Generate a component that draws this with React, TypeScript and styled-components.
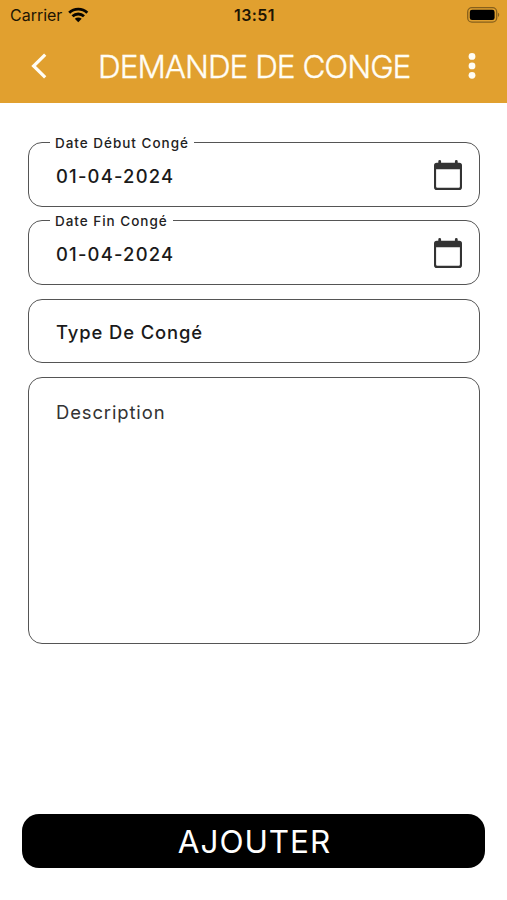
import React from "react";
import styled, { createGlobalStyle } from "styled-components";

const GlobalStyle = createGlobalStyle`
  * { box-sizing: border-box; }
  body { margin: 0; background: #fff; font-family: Inter, "Liberation Sans", sans-serif; }
`;

const Screen = styled.div`
  display: flex;
  flex-direction: column;
  height: 900px;
  width: 100%;
  background: #fff;
  overflow: hidden;
`;

const Header = styled.header`
  height: 103px;
  flex: none;
  background: #e1a02f;
`;

const StatusBar = styled.div`
  display: grid;
  grid-template-columns: 1fr auto 1fr;
  align-items: center;
  height: 30px;
  padding: 0 8px 0 10px;
  color: #1d1503;
`;

const Carrier = styled.div`
  display: flex;
  align-items: center;
  gap: 6px;
  font-size: 16px;
  letter-spacing: -0.02px;
  line-height: 30px;
  svg { display: block; margin-top: -1px; }
`;

const Clock = styled.div`
  font-size: 16px;
  font-weight: 600;
  letter-spacing: 0.4px;
`;

const Battery = styled.div`
  display: flex;
  justify-content: flex-end;
  margin: -1px -1px 0 0;
`;

const NavBar = styled.div`
  display: flex;
  align-items: center;
  height: 73px;
  padding: 0 28px 0 30px;
`;

const IconButton = styled.button`
  display: flex;
  margin-top: -1px;
  padding: 0;
  border: 0;
  background: none;
  color: #fffdf5;
`;

const Title = styled.h1`
  flex: 1;
  margin: 0;
  padding-left: 50px;
  color: #fffdf5;
  font-size: 31.5px;
  font-weight: 300;
  line-height: 73px;
  letter-spacing: -1px;
  white-space: nowrap;
  -webkit-text-stroke: 0.35px #fffdf5;
`;

const Form = styled.main`
  display: flex;
  flex-direction: column;
  flex: 1;
  gap: 14px;
  padding: 39px 27px 0 28px;
`;

const DateGroup = styled.div`
  display: flex;
  flex-direction: column;
  gap: 13px;
`;

const Field = styled.div<{ $height: number; $top?: boolean }>`
  position: relative;
  display: flex;
  flex: none;
  align-items: ${(p) => (p.$top ? "flex-start" : "center")};
  justify-content: space-between;
  height: ${(p) => p.$height}px;
  padding: ${(p) => (p.$top ? "22px 16px 0 27px" : "2px 17px 0 27px")};
  border: 1.4px solid #555;
  border-radius: 14px;
`;

const FloatingLabel = styled.label`
  position: absolute;
  top: -9px;
  left: 21px;
  padding: 0 5px 0 5px;
  background: #fff;
  color: #222;
  font-size: 13.5px;
  font-weight: 500;
  line-height: 18px;
  letter-spacing: 0.98px;
  white-space: nowrap;
`;

const Value = styled.span<{ $spacing: number; $weight?: number }>`
  color: ${(p) => (p.$weight === 400 ? "#333" : "#1a1a1a")};
  font-size: 18.4px;
  font-weight: ${(p) => p.$weight ?? 500};
  line-height: 24px;
  letter-spacing: ${(p) => p.$spacing}px;
`;

const DateValue = styled(Value)`
  padding-top: 1px;
`;

const Footer = styled.footer`
  padding: 0 22px 32px 22px;
`;

const SubmitButton = styled.button`
  display: block;
  width: 100%;
  height: 54px;
  padding: 2px 0 0 2px;
  border: 0;
  border-radius: 17px;
  background: #000;
  color: #fff;
  font-family: inherit;
  font-size: 31.5px;
  font-weight: 400;
  line-height: 52px;
  letter-spacing: 0.95px;
`;

const WifiIcon = () => (
  <svg width="21" height="16" viewBox="0 0 21 16" fill="none" stroke="#080500" strokeWidth="2.9">
    <path d="M1.2 5.7C6.3 .9 14.2 .9 19.3 5.7" />
    <path d="M4.5 9.2c3.3-3 8.2-3 11.5 0" />
    <path d="M10.25 15.3 6.8 11.8c2-1.7 4.9-1.7 6.9 0Z" fill="#080500" stroke="none" />
  </svg>
);

const BatteryIcon = () => (
  <svg width="33" height="16" viewBox="0 0 33 16">
    <rect x=".7" y=".7" width="29" height="14.4" rx="4.2" fill="none" stroke="#87601c" strokeWidth="1.3" />
    <rect x="2.8" y="2.8" width="24.8" height="10.2" rx="2.3" fill="#000" />
    <path d="M31 5.8c1.7.7 1.7 3.5 0 4.2Z" fill="#87601c" />
  </svg>
);

const BackIcon = () => (
  <svg width="18" height="28" viewBox="0 0 18 28" fill="none" stroke="currentColor" strokeWidth="3.2">
    <path d="M15.2 2.6 3.6 14l11.6 11.4" />
  </svg>
);

const MoreIcon = () => (
  <svg width="14" height="28" viewBox="0 0 14 28" fill="currentColor">
    <circle cx="7" cy="4.4" r="3.4" />
    <circle cx="7" cy="13.9" r="3.4" />
    <circle cx="7" cy="23.3" r="3.4" />
  </svg>
);

const CalendarIcon = () => (
  <svg width="28" height="31" viewBox="0 0 28 31" fill="#333">
    <path
      fillRule="evenodd"
      d="M4.3 1.5a1.4 1.4 0 0 1 2.8 0v1.3h13.8V1.5a1.4 1.4 0 0 1 2.8 0v1.3h1.5A2.8 2.8 0 0 1 28 5.6v21.6a2.8 2.8 0 0 1-2.8 2.8H2.8A2.8 2.8 0 0 1 0 27.2V5.6a2.8 2.8 0 0 1 2.8-2.8h1.5ZM2.1 9.2v17.4a1.2 1.2 0 0 0 1.2 1.2h21.4a1.2 1.2 0 0 0 1.2-1.2V9.2Z"
    />
  </svg>
);

const dateFields = [
  { label: "Date Début Congé", value: "01-04-2024" },
  { label: "Date Fin Congé", value: "01-04-2024" },
];

export default function App() {
  return (
    <Screen>
      <GlobalStyle />
      <Header>
        <StatusBar>
          <Carrier>Carrier <WifiIcon /></Carrier>
          <Clock>13:51</Clock>
          <Battery><BatteryIcon /></Battery>
        </StatusBar>
        <NavBar>
          <IconButton aria-label="Retour"><BackIcon /></IconButton>
          <Title>DEMANDE DE CONGE</Title>
          <IconButton aria-label="Menu"><MoreIcon /></IconButton>
        </NavBar>
      </Header>
      <Form>
        <DateGroup>
          {dateFields.map((f) => (
            <Field $height={65} key={f.label}>
              <FloatingLabel>{f.label}</FloatingLabel>
              <DateValue $spacing={1.2}>{f.value}</DateValue>
              <CalendarIcon />
            </Field>
          ))}
        </DateGroup>
        <Field $height={64}>
          <Value $spacing={0.9}>Type De Congé</Value>
        </Field>
        <Field $height={267} $top>
          <Value $spacing={0.9} $weight={400}>Description</Value>
        </Field>
      </Form>
      <Footer>
        <SubmitButton>AJOUTER</SubmitButton>
      </Footer>
    </Screen>
  );
}
